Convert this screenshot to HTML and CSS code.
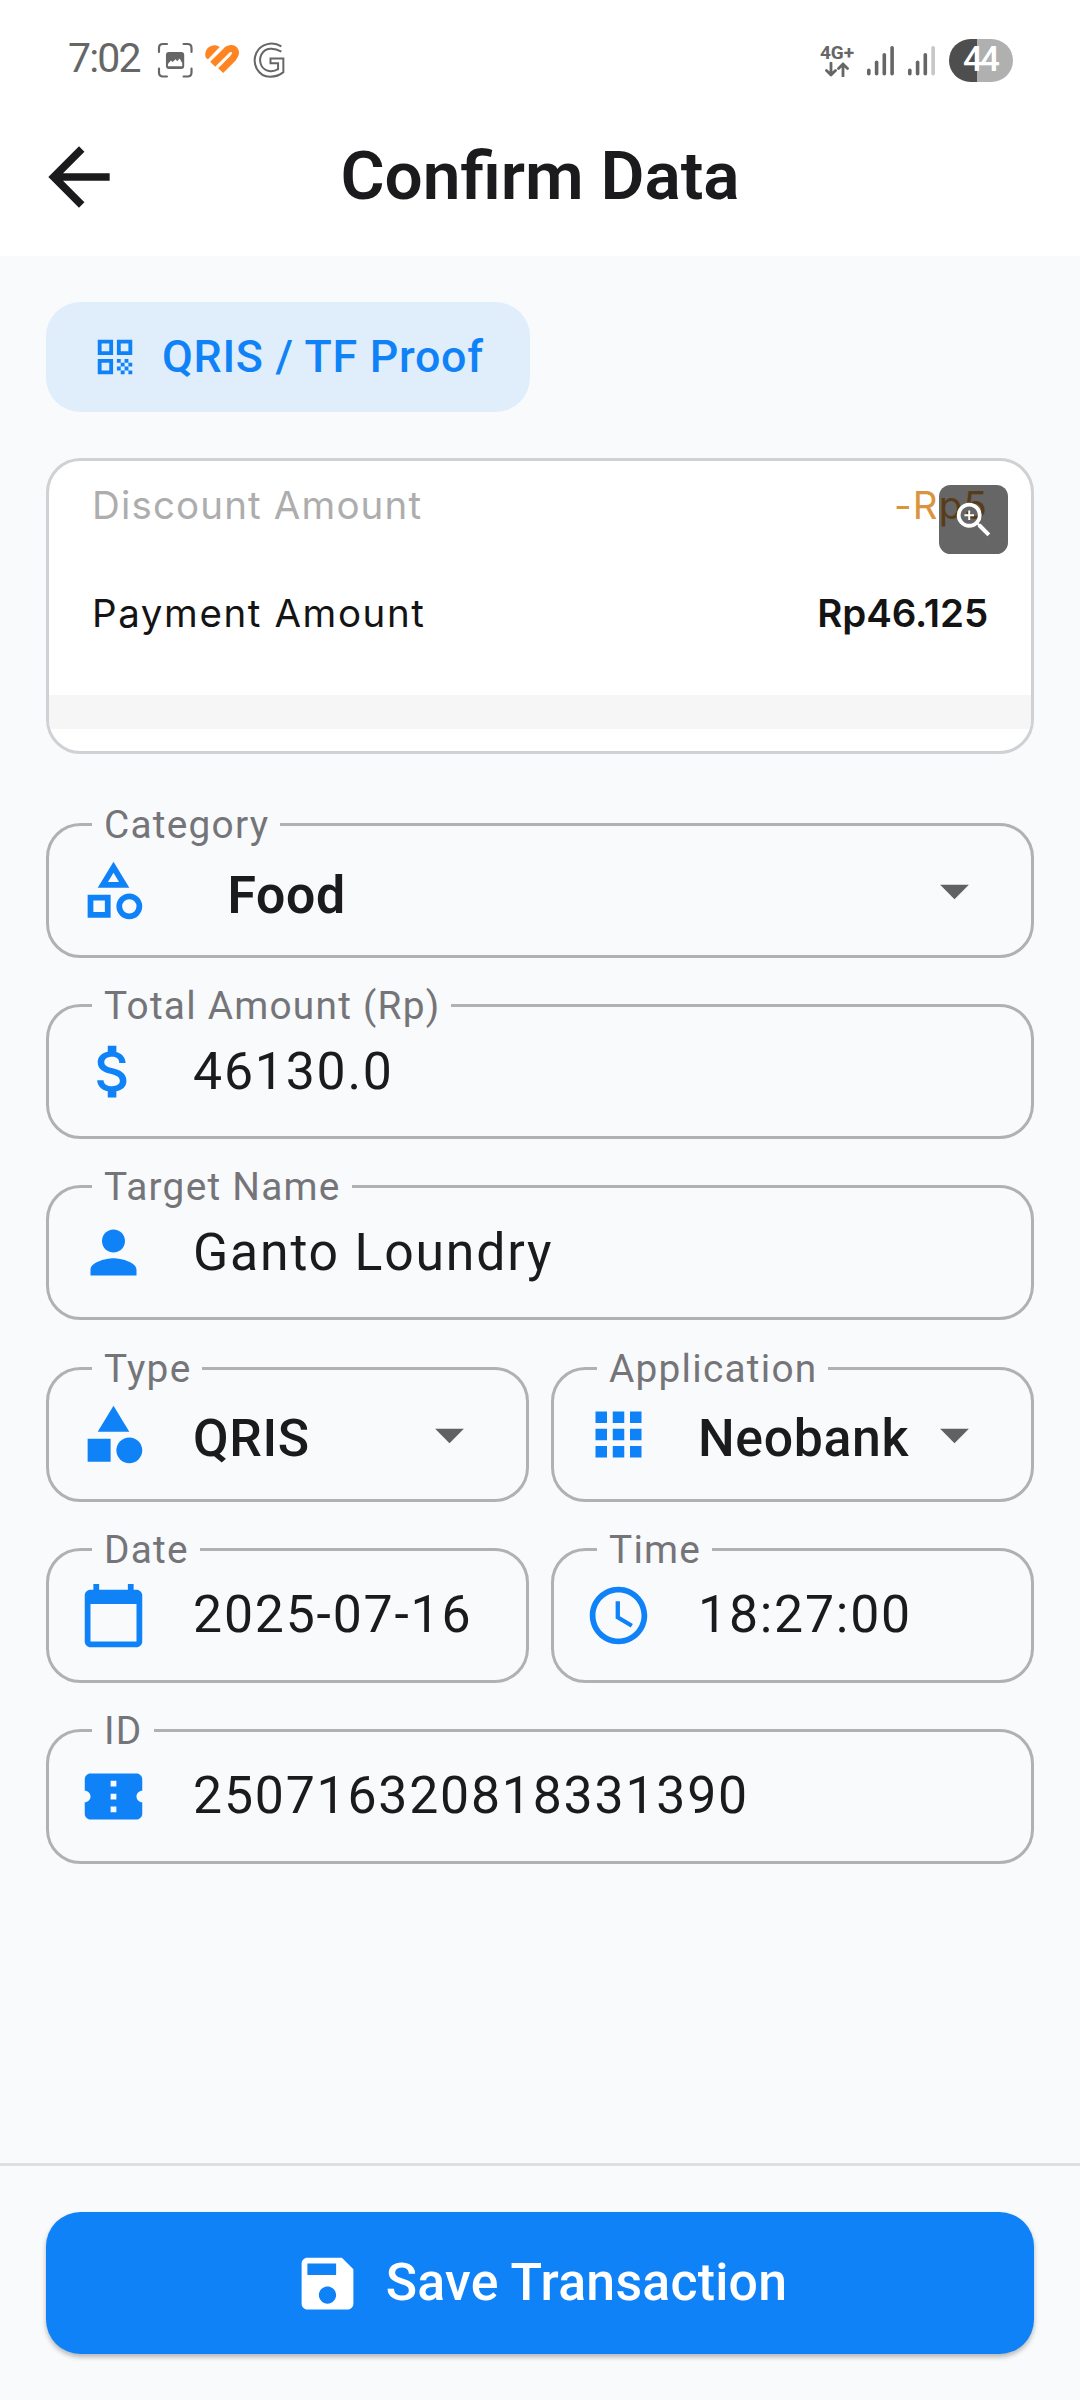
FILE: index.html
```
<!DOCTYPE html>
<html lang="en">
<head>
<meta charset="utf-8">
<title>Confirm Data</title>
<link rel="stylesheet" href="styles.css">
</head>
<body>
<div class="screen">
  <header class="header">
    <div class="status">
      <span class="clock">7:02</span>
      <svg class="st-shot" viewBox="0 0 110 110"><g fill="none" stroke="#666" stroke-width="6.5" stroke-linecap="round"><path d="M6 30V18Q6 6 18 6h12M80 6h12q12 0 12 12v12M104 80v12q0 12-12 12H80M30 104H18Q6 104 6 92V80"/></g><rect x="27" y="30" width="55" height="51" rx="9" fill="#666"/><path d="M33 73V66l9-10 5 4 9-8 5 6 7-8 8 13v10z" fill="#fff"/></svg>
      <svg class="st-heart" viewBox="0 0 110 100"><path d="M4 38C1 12 30-2 47 12L12 49C6 46 4 42 4 38Z" fill="#ff8522"/><path d="M26 64L64 26C74 14 88 14 93 23C98 32 92 40 87 46L50 83" fill="none" stroke="#ff8522" stroke-width="21" stroke-linejoin="round"/></svg>
      <svg class="st-g" viewBox="0 0 100 110"><path d="M86 13C60-3 24 4 10 33C-4 65 14 105 52 105C68 105 80 101 92 91V50H53V64H76V82C60 92 36 90 26 72C14 48 28 22 52 20C64 19 74 22 86 29" fill="none" stroke="#666" stroke-width="6"/></svg>
      <span class="spacer"></span>
      <div class="net">
        <span class="net-label">4G+</span>
        <svg class="net-arrows" viewBox="0 0 24 15"><path d="M6 1v12M1.500 8.500L6 13l4.500-4.500M18 14V2M13.500 6.500L18 2l4.500 4.500" fill="none" stroke="#666" stroke-width="2.800" stroke-linecap="round" stroke-linejoin="round"/></svg>
      </div>
      <svg class="bars bars-a" viewBox="0 0 28 31" fill="#666"><rect x="0" y="23.500" width="3.600" height="7" rx="1.800"/><rect x="7.800" y="15.500" width="3.600" height="15" rx="1.800"/><rect x="15.500" y="8" width="3.600" height="22.500" rx="1.800"/><rect x="23.300" y="1" width="3.600" height="29.500" rx="1.800"/></svg>
      <svg class="bars bars-b" viewBox="0 0 28 31" fill="#666"><rect x="0" y="23.500" width="3.600" height="7" rx="1.800"/><rect x="7.800" y="15.500" width="3.600" height="15" rx="1.800"/><rect x="15.500" y="8" width="3.600" height="22.500" rx="1.800"/><rect x="23.300" y="1" width="3.600" height="29.500" rx="1.800" fill="#c6c6c6"/></svg>
      <span class="battery">44</span>
    </div>
    <div class="appbar">
      <svg class="back" viewBox="0 0 24 24"><path d="M20 11H7.830l5.590-5.590L12 4l-8 8 8 8 1.410-1.410L7.830 13H20v-2z"/></svg>
      <h1 class="title">Confirm Data</h1>
    </div>
  </header>

  <main class="content">
    <div class="chip">
      <svg class="chip-icon" viewBox="0 0 24 24"><path fill-rule="evenodd" d="M3 11h8V3H3v8zm2-6h4v4H5V5zM3 21h8v-8H3v8zm2-6h4v4H5v-4zM13 3v8h8V3h-8zm6 6h-4V5h4v4zM19 19h2v2h-2zM13 13h2v2h-2zM15 15h2v2h-2zM13 17h2v2h-2zM15 19h2v2h-2zM17 17h2v2h-2zM17 13h2v2h-2zM19 15h2v2h-2z"/></svg>
      <span>QRIS / TF Proof</span>
    </div>

    <section class="proof">
      <div class="proof-row muted"><span>Discount Amount</span><span class="discount">-Rp5</span></div>
      <div class="proof-row"><span>Payment Amount</span><span class="amount">Rp46.125</span></div>
      <div class="proof-band"></div>
      <div class="zoom"><svg viewBox="0 0 24 24"><path d="M15.500 14h-.79l-.28-.27A6.471 6.471 0 0 0 16 9.500 6.500 6.500 0 1 0 9.500 16c1.610 0 3.090-.59 4.230-1.570l.27.28v.79l5 4.990L20.490 19l-4.990-5zm-6 0C7.010 14 5 11.990 5 9.500S7.010 5 9.500 5 14 7.010 14 9.500 11.990 14 9.500 14z"/><path d="M12 10h-2v2H9v-2H7V9h2V7h1v2h2v1z"/></svg></div>
    </section>

    <form class="fields">
      <fieldset class="field">
        <legend>Category</legend>
        <div class="body">
          <svg class="icon" viewBox="0 0 24 24"><path fill-rule="evenodd" d="M12 2l-5.500 9h11L12 2zm0 3.840L13.930 9h-3.870L12 5.840zM17.500 13a4.500 4.500 0 1 0 0 9 4.500 4.500 0 0 0 0-9zm0 7a2.500 2.500 0 1 1 0-5 2.500 2.500 0 0 1 0 5zM3 21.500h8v-8H3v8zm2-6h4v4H5v-4z"/></svg>
          <span class="value select indent">Food</span>
          <svg class="caret" viewBox="0 0 24 24"><path d="M7 10l5 5 5-5z"/></svg>
        </div>
      </fieldset>
      <fieldset class="field">
        <legend>Total Amount (Rp)</legend>
        <div class="body">
          <svg class="icon" viewBox="0 0 24 24"><path d="M11.800 10.900c-2.270-.59-3-1.200-3-2.150 0-1.090 1.010-1.850 2.700-1.850 1.780 0 2.440.85 2.500 2.100h2.210c-.07-1.720-1.120-3.300-3.210-3.810V3h-3v2.160c-1.940.42-3.500 1.680-3.500 3.610 0 2.310 1.910 3.460 4.700 4.130 2.500.6 3 1.480 3 2.410 0 .69-.49 1.790-2.700 1.790-2.060 0-2.870-.92-2.980-2.100h-2.200c.12 2.190 1.760 3.420 3.680 3.830V21h3v-2.150c1.950-.37 3.500-1.500 3.500-3.550 0-2.840-2.430-3.810-4.700-4.400z"/></svg>
          <span class="value">46130.0</span>
        </div>
      </fieldset>
      <fieldset class="field">
        <legend>Target Name</legend>
        <div class="body">
          <svg class="icon" viewBox="0 0 24 24"><path d="M12 12c2.210 0 4-1.790 4-4s-1.790-4-4-4-4 1.790-4 4 1.790 4 4 4zm0 2c-2.670 0-8 1.340-8 4v2h16v-2c0-2.660-5.330-4-8-4z"/></svg>
          <span class="value">Ganto Loundry</span>
        </div>
      </fieldset>
      <div class="pair">
        <fieldset class="field">
          <legend>Type</legend>
          <div class="body">
            <svg class="icon" viewBox="0 0 24 24"><path d="M12 2l-5.500 9h11zM3 13.500h8v8H3z"/><circle cx="17.500" cy="17.500" r="4.500"/></svg>
            <span class="value select">QRIS</span>
            <svg class="caret" viewBox="0 0 24 24"><path d="M7 10l5 5 5-5z"/></svg>
          </div>
        </fieldset>
        <fieldset class="field">
          <legend>Application</legend>
          <div class="body">
            <svg class="icon" viewBox="0 0 24 24"><path d="M4 8h4V4H4v4zm6 12h4v-4h-4v4zm-6 0h4v-4H4v4zm0-6h4v-4H4v4zm6 0h4v-4h-4v4zm6-10v4h4V4h-4zm-6 4h4V4h-4v4zm6 6h4v-4h-4v4zm0 6h4v-4h-4v4z"/></svg>
            <span class="value select">Neobank</span>
            <svg class="caret" viewBox="0 0 24 24"><path d="M7 10l5 5 5-5z"/></svg>
          </div>
        </fieldset>
      </div>
      <div class="pair">
        <fieldset class="field">
          <legend>Date</legend>
          <div class="body">
            <svg class="icon" viewBox="0 0 24 24"><path d="M20 3h-1V1h-2v2H7V1H5v2H4c-1.100 0-2 .9-2 2v16c0 1.100.9 2 2 2h16c1.100 0 2-.9 2-2V5c0-1.100-.9-2-2-2zm0 18H4V8h16v13z"/></svg>
            <span class="value">2025-07-16</span>
          </div>
        </fieldset>
        <fieldset class="field">
          <legend>Time</legend>
          <div class="body">
            <svg class="icon" viewBox="0 0 24 24"><path d="M11.990 2C6.470 2 2 6.480 2 12s4.470 10 9.990 10C17.520 22 22 17.520 22 12S17.520 2 11.990 2zM12 20c-4.420 0-8-3.580-8-8s3.580-8 8-8 8 3.580 8 8-3.580 8-8 8z"/><path d="M12.500 7H11v6l5.250 3.150.75-1.230-4.500-2.670z"/></svg>
            <span class="value">18:27:00</span>
          </div>
        </fieldset>
      </div>
      <fieldset class="field">
        <legend>ID</legend>
        <div class="body">
          <svg class="icon" viewBox="0 0 24 24"><path d="M22 10V6c0-1.110-.9-2-2-2H4c-1.100 0-1.990.89-1.990 2v4c1.100 0 1.990.9 1.990 2s-.89 2-2 2v4c0 1.100.9 2 2 2h16c1.100 0 2-.9 2-2v-4c-1.100 0-2-.9-2-2s.9-2 2-2zm-9 7.500h-2v-2h2v2zm0-4.500h-2v-2h2v2zm0-4.500h-2v-2h2v2z"/></svg>
          <span class="value">250716320818331390</span>
        </div>
      </fieldset>
    </form>
  </main>

  <footer class="footer">
    <button class="save" type="button">
      <svg class="save-icon" viewBox="0 0 24 24"><path d="M17 3H5c-1.110 0-2 .9-2 2v14c0 1.100.89 2 2 2h14c1.100 0 2-.9 2-2V7l-4-4zm-5 16c-1.660 0-3-1.340-3-3s1.340-3 3-3 3 1.340 3 3-1.340 3-3 3zm3-10H5V5h10v4z"/></svg>
      <span>Save Transaction</span>
    </button>
  </footer>
</div>
</body>
</html>
```
FILE: styles.css
```
* { box-sizing: border-box; }
body { margin: 0; font-family: Roboto, sans-serif; color: #1b1b1d; }
svg { display: block; flex: none; }

.screen { display: flex; flex-direction: column; width: 1080px; height: 2400px; background: #f8fafc; }

/* Status bar and app bar */
.header { height: 256px; background: #fff; }
.status { display: flex; align-items: center; height: 120px; padding: 0 67px 0 67px; color: #666; }
.clock { width: 90px; font-size: 41px; line-height: 48px; letter-spacing: -1.8px; padding-left: 1px; margin-top: -4px; }
.st-shot { width: 36.500px; height: 36.500px; }
.st-heart { width: 36.700px; height: 33.300px; margin-left: 10px; }
.st-g { width: 33px; height: 36.500px; margin-left: 13px; }
.spacer { flex: 1; }
.net { display: flex; flex-direction: column; align-items: center; width: 34px; margin-right: 13px; }
.net-label { font-size: 19px; font-weight: 700; line-height: 17px; }
.net-arrows { width: 24px; height: 15px; margin-top: 1px; }
.bars { width: 28px; height: 31px; margin-top: 1px; }
.bars-a { margin-right: 13px; }
.bars-b { margin-right: 13px; }
.battery { width: 64px; height: 43px; border-radius: 22px; background: linear-gradient(90deg, #4e4e4e 43%, #b0b0b0 43%); color: #fff; font-size: 35px; font-weight: 500; line-height: 42px; letter-spacing: -3px; text-indent: -2px; text-align: center; }

.appbar { display: grid; grid-template-columns: 158px 1fr 158px; align-items: center; height: 113px; }
.back { width: 92px; height: 92px; margin-left: 33px; fill: #1b1b1d; }
.title { margin: 0; padding-bottom: 2px; font-size: 67.500px; font-weight: 600; line-height: 80px; text-align: center; }

/* Content */
.content { flex: 1; display: flex; flex-direction: column; align-items: stretch; padding: 45.500px 46px 0; }
.chip { display: flex; align-items: center; align-self: flex-start; width: 484px; height: 110.500px; padding-left: 46px; gap: 24px; border-radius: 34.500px; background: #e0eefb; color: #0f82f8; font-size: 44.800px; font-weight: 500; letter-spacing: .700px; white-space: nowrap; }
.chip-icon { width: 46px; height: 46px; fill: #0f82f8; }

.proof { position: relative; height: 296px; margin-top: 46px; padding-top: 24px; border: 3px solid #cfd1d4; border-radius: 34.500px; background: #fff; overflow: hidden; font-family: Inter, sans-serif; font-size: 38.500px; color: #141414; }
.proof-row { display: flex; justify-content: space-between; height: 40px; padding: 0 43px 0 43px; line-height: 40px; letter-spacing: 1.600px; }
.proof-row + .proof-row { margin-top: 68px; }
.muted { color: #adadad; letter-spacing: 1.150px; }
.discount { color: #db943e; letter-spacing: 1.150px; }
.amount { font-weight: 600; letter-spacing: -.1px; }
.proof-band { height: 33.500px; margin-top: 62px; background: #f6f6f6; }
.zoom { position: absolute; top: 24px; right: 23px; display: flex; align-items: center; justify-content: center; width: 69px; height: 69px; border-radius: 11.500px; background: rgba(0, 0, 0, .6); }
.zoom svg { width: 46px; height: 46px; fill: #fff; }

.fields { display: flex; flex-direction: column; gap: 46.200px; margin-top: 69px; }
.pair { display: grid; grid-template-columns: 483px 483px; gap: 22px; }
.field { min-width: 0; height: 135px; margin: 0; padding: 0; border: 3px solid #b0b1b3; border-radius: 34.500px; }
.field legend { height: 3px; margin-left: 43px; padding: 0 11px 0 12px; font-size: 38.800px; line-height: 3px; letter-spacing: 1.240px; color: #757579; white-space: nowrap; }
.body { display: flex; align-items: center; height: 129px; padding: 0 42px 0 30px; }
.icon { width: 69px; height: 69px; fill: #0f82f8; }
.value { flex: 1; min-width: 0; margin-left: 45px; font-size: 51.750px; line-height: 60px; letter-spacing: 1.800px; white-space: nowrap; }
.select { padding-top: 9px; font-weight: 550; letter-spacing: .65px; }
.indent { padding-top: 11px; padding-left: 34.500px; font-weight: 600; }
.caret { width: 69px; height: 69px; fill: #616161; }

/* Bottom action */
.footer { height: 237px; padding: 46px 46px 0; border-top: 3px solid #dedfe0; }
.save { display: flex; align-items: center; justify-content: center; gap: 24px; width: 988px; height: 142px; padding: 0; border: 0; border-radius: 34.500px; background: #0f82f8; box-shadow: 0 3px 5px rgba(0, 0, 0, .28); color: #fff; font-family: Roboto, sans-serif; font-size: 51.750px; font-weight: 500; letter-spacing: .25px; }
.save span { padding-bottom: 2px; }
.save-icon { width: 69px; height: 69px; fill: #fff; }
```
